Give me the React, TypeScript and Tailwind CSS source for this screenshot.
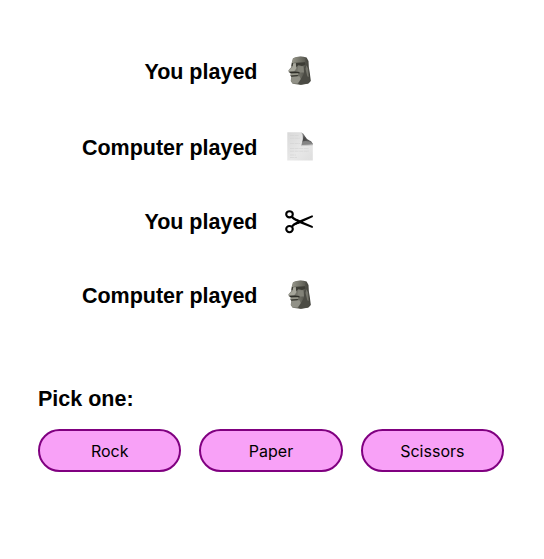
import React from "react";

type Choice = "rock" | "paper" | "scissors";

function Moai() {
  return (
    <svg width="40" height="40" viewBox="0 0 40 40" role="img" aria-label="Rock">
      <defs>
        <linearGradient id="stone" x1="0" x2="1">
          <stop offset="0" stopColor="#8c8c82" />
          <stop offset=".55" stopColor="#68685f" />
          <stop offset="1" stopColor="#383832" />
        </linearGradient>
        <linearGradient id="brow" x1="0" x2="1">
          <stop offset="0" stopColor="#96968a" />
          <stop offset="1" stopColor="#5c5c53" />
        </linearGradient>
      </defs>
      <path fill="url(#stone)" d="M13 8.2Q19 5.5 26.6 7.4L28.5 11L28.8 17L29.8 23L30.8 31L28.5 33.5L21 35L12.5 33.8L10.7 31L11.3 26.8L10 25.5L11 23.5L8.8 22.3L8.3 20.5L11.3 17L11.4 13.7Z" />
      <path fill="url(#brow)" d="M13 8.2Q19 6 25.2 7.4L25 12.2L12 13.4Z" />
      <path fill="#3c3c35" d="M12.1 13.1L25 12.2L25.5 14.5L22 16L18.5 15L16.5 17L14 15.6L11.3 16.5Z" />
      <path fill="#a6a69b" d="M13.2 13.3L15.8 13L16.3 18.5L14.2 21.3L9.2 21.6L8.8 20.5L12.5 17Z" />
      <path fill="#828278" d="M18.3 16L23.5 16.2L24 22.5L20 22.4L17.3 20.5Z" />
      <path fill="#2e2e28" d="M9 21.8L15.5 21.4L19.5 22.3L19.5 23.4L11 23.8Z" />
      <path fill="#98988c" d="M11 23.6L18.5 23.3L18 24.8L10.8 25.3Z" />
      <path fill="#33332d" d="M11 25.4L18.5 25.1L17 26.6L11.2 26.7Z" />
      <path fill="#919187" d="M11.5 27L19.5 26.2L21.5 31L17 33.5L12.5 33L11 31Z" />
      <path fill="#4b4b44" d="M21.5 28L24 23.5L24.3 17L27 16.5L29.3 25L30 31.5L27.5 33.6L20 34.5L18 33.5Z" />
      <path fill="#75756c" d="M26.3 15.3L28.2 18.5L28.7 27L27.3 26.3L25.5 19Z" />
    </svg>
  );
}

function Page() {
  return (
    <svg width="40" height="40" viewBox="0 0 40 40" role="img" aria-label="Paper">
      <defs>
        <linearGradient id="sheet" x1="0" y1="0" x2="1" y2="1">
          <stop offset="0" stopColor="#d8d8d8" />
          <stop offset=".55" stopColor="#e8e8e8" />
          <stop offset="1" stopColor="#dedede" />
        </linearGradient>
        <linearGradient id="curl" x1="0" y1="0" x2="1" y2="1">
          <stop offset="0" stopColor="#aaa" />
          <stop offset=".4" stopColor="#484848" />
          <stop offset="1" stopColor="#777" />
        </linearGradient>
      </defs>
      <path fill="url(#sheet)" d="M7.3 6.3H21.2Q23.5 8 22 18L32.8 17V34.6H7.3Z" />
      <path fill="url(#curl)" d="M21 6.3Q23.5 7 25.5 11Q27 14 29.5 14.4Q32 15 32.8 18.6Q29 15 22.2 16.5Q24 9.5 21 6.3Z" />
      <path fill="#858585" d="M22.2 15.5Q28 14 32.6 17.5V18.8L21.4 19.4Z" />
      <path fill="#c9c9c9" d="M21.4 19.1L32.6 18.5V19.5L21 20.3Z" />
      <path stroke="#d2d2d2" strokeWidth=".6" strokeDasharray="4 .6" d="M10 9.5H19M10 12.3H20M10 17.5H20M10 22.5H29M10 25.2H29M10 29H16M10 31.5H17" />
    </svg>
  );
}

function Shears() {
  return (
    <svg width="40" height="40" viewBox="0 0 40 40" role="img" aria-label="Scissors" fill="none" stroke="#000">
      <ellipse cx="9.5" cy="12.3" rx="3.3" ry="3.1" strokeWidth="2.1" />
      <ellipse cx="9.5" cy="27.1" rx="3.3" ry="3.1" strokeWidth="2.1" />
      <path strokeWidth="2.2" d="M12 14.5Q13 17 19 19.2M12 24.8Q13 22.3 19 20.1" />
      <path fill="#000" stroke="none" d="M15 16.5L20 18.2L32.3 13.2Q33.8 14 32.5 15.2L22.8 19.7L32.5 24.1Q33.8 25.2 32.3 26.1L20 21.2L15 22.9L18 19.7Z" />
    </svg>
  );
}

const icons = { rock: Moai, paper: Page, scissors: Shears };

const plays: { player: string; choice: Choice; row: string; offset: string }[] = [
  { player: "You played", choice: "rock", row: "h-[76px]", offset: "mt-[-2px]" },
  { player: "Computer played", choice: "paper", row: "h-[74px]", offset: "mt-[-2px]" },
  { player: "You played", choice: "scissors", row: "h-[74px]", offset: "mt-0" },
  { player: "Computer played", choice: "rock", row: "h-[74px]", offset: "mt-[-2px]" },
];

export default function App() {
  return (
    <main className="h-[559px] bg-white pt-[52px] font-['Liberation_Sans',Arial,sans-serif] text-black">
      {plays.map(({ player, choice, row, offset }, i) => {
        const Icon = icons[choice];
        return (
          <div key={i} className={`flex items-start ${row}`}>
            <h2 className="w-[257.5px] text-right text-[21.5px] leading-10 font-bold">{player}</h2>
            <div className={`ml-[22.5px] ${offset}`}><Icon /></div>
          </div>
        );
      })}
      <section className="pt-[37px] pr-10 pl-[38px]">
        <h2 className="text-[21.5px] leading-6 font-bold">Pick one:</h2>
        <div className="mt-[18px] grid grid-cols-3 gap-[18px]">
          {["Rock", "Paper", "Scissors"].map((label) => (
            <button key={label} className="h-[43px] rounded-full border-2 border-[#800080] bg-[#f8a1f7] font-['Inter','Liberation_Sans',sans-serif] text-base text-black">
              {label}
            </button>
          ))}
        </div>
      </section>
    </main>
  );
}
